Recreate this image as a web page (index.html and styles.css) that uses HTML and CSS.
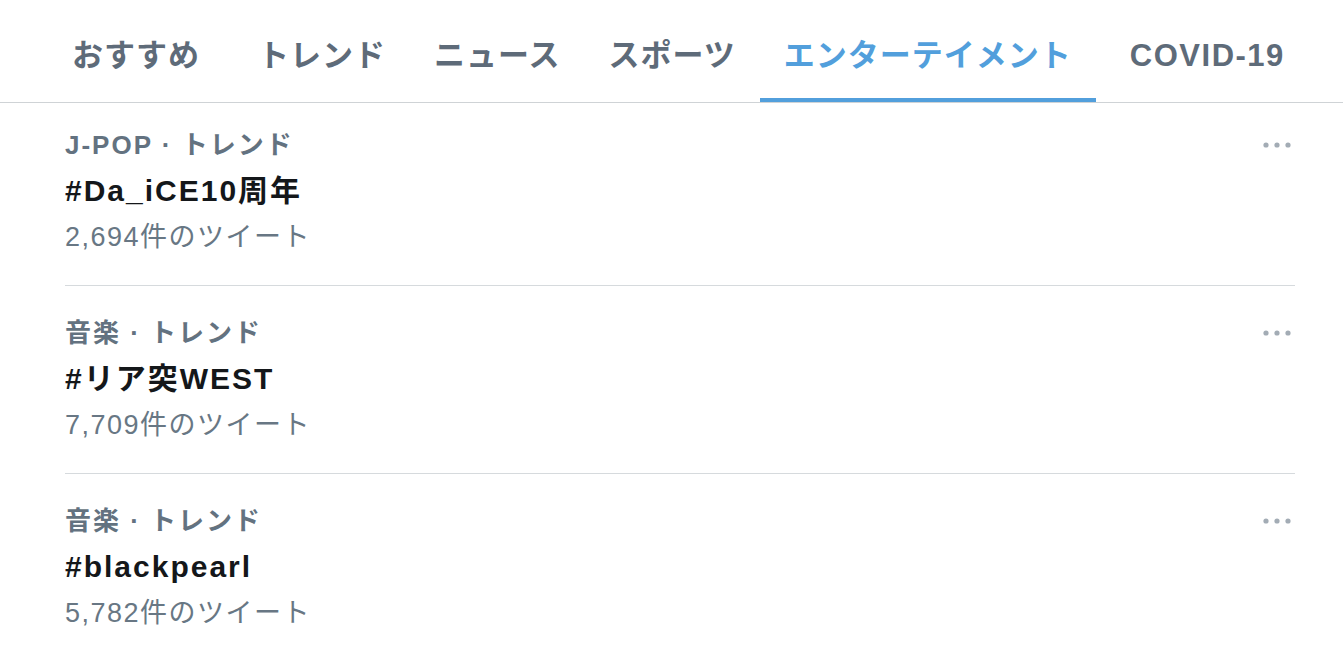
FILE: index.html
```html
<!DOCTYPE html>
<html lang="ja">
<head>
<meta charset="utf-8">
<title>トレンド</title>
<link rel="stylesheet" href="styles.css">
</head>
<body>
<nav class="tabs">
  <a class="tab tab-first">おすすめ</a>
  <a class="tab">トレンド</a>
  <a class="tab">ニュース</a>
  <a class="tab">スポーツ</a>
  <a class="tab is-active">エンターテイメント</a>
  <a class="tab tab-last">COVID-19</a>
</nav>
<main class="trends">
  <section class="trend">
    <div class="trend-body">
      <div class="trend-cat">J-POP · トレンド</div>
      <div class="trend-title">#Da_iCE10周年</div>
      <div class="trend-count">2,694件のツイート</div>
    </div>
    <div class="trend-more"><svg width="28" height="6" viewBox="0 0 28 6"><circle cx="3" cy="3" r="2.6"/><circle cx="14" cy="3" r="2.6"/><circle cx="25" cy="3" r="2.6"/></svg></div>
  </section>
  <section class="trend">
    <div class="trend-body">
      <div class="trend-cat">音楽 · トレンド</div>
      <div class="trend-title">#リア突WEST</div>
      <div class="trend-count">7,709件のツイート</div>
    </div>
    <div class="trend-more"><svg width="28" height="6" viewBox="0 0 28 6"><circle cx="3" cy="3" r="2.6"/><circle cx="14" cy="3" r="2.6"/><circle cx="25" cy="3" r="2.6"/></svg></div>
  </section>
  <section class="trend">
    <div class="trend-body">
      <div class="trend-cat">音楽 · トレンド</div>
      <div class="trend-title">#blackpearl</div>
      <div class="trend-count">5,782件のツイート</div>
    </div>
    <div class="trend-more"><svg width="28" height="6" viewBox="0 0 28 6"><circle cx="3" cy="3" r="2.6"/><circle cx="14" cy="3" r="2.6"/><circle cx="25" cy="3" r="2.6"/></svg></div>
  </section>
</main>
</body>
</html>
```
FILE: styles.css
```css
html, body {
  margin: 0;
  padding: 0;
  background: #ffffff;
}
body {
  font-family: "Liberation Sans", "Noto Sans CJK JP", sans-serif;
  color: #14171a;
  overflow: hidden;
}
.tabs {
  display: flex;
  padding-left: 48px;
  border-bottom: 1px solid #cfd3d6;
}
.tab {
  display: block;
  padding: 36px 24px 22px;
  line-height: 40px;
  font-size: 31px;
  font-weight: 700;
  letter-spacing: 1px;
  color: #5e6b79;
  border-bottom: 4px solid transparent;
  white-space: nowrap;
}
.tab-first {
  margin-right: 10px;
}
.tab-last {
  margin-left: 10px;
  letter-spacing: 1.5px;
}
.tab.is-active {
  color: #529fdc;
  border-bottom-color: #529fdc;
}
.trends {
  margin: 0 48px 0 65px;
}
.trend {
  display: flex;
  justify-content: space-between;
  align-items: flex-start;
  padding: 24px 0 25px;
  border-bottom: 1px solid #d6dadd;
}
.trend:first-child {
  padding-top: 19px;
}
.trend-body {
  display: flex;
  flex-direction: column;
}
.trend-cat {
  font-size: 26px;
  line-height: 46px;
  font-weight: 700;
  letter-spacing: 2px;
  color: #637280;
}
.trend-title {
  font-size: 30px;
  line-height: 46px;
  font-weight: 700;
  letter-spacing: 2px;
  color: #14171a;
}
.trend-count {
  font-size: 27px;
  line-height: 46px;
  font-weight: 400;
  letter-spacing: 1.5px;
  color: #687784;
}
.trend-more {
  display: flex;
  align-items: center;
  height: 46px;
  margin-right: 4px;
}
.trend-more svg {
  fill: #a3acb5;
  display: block;
}
```
